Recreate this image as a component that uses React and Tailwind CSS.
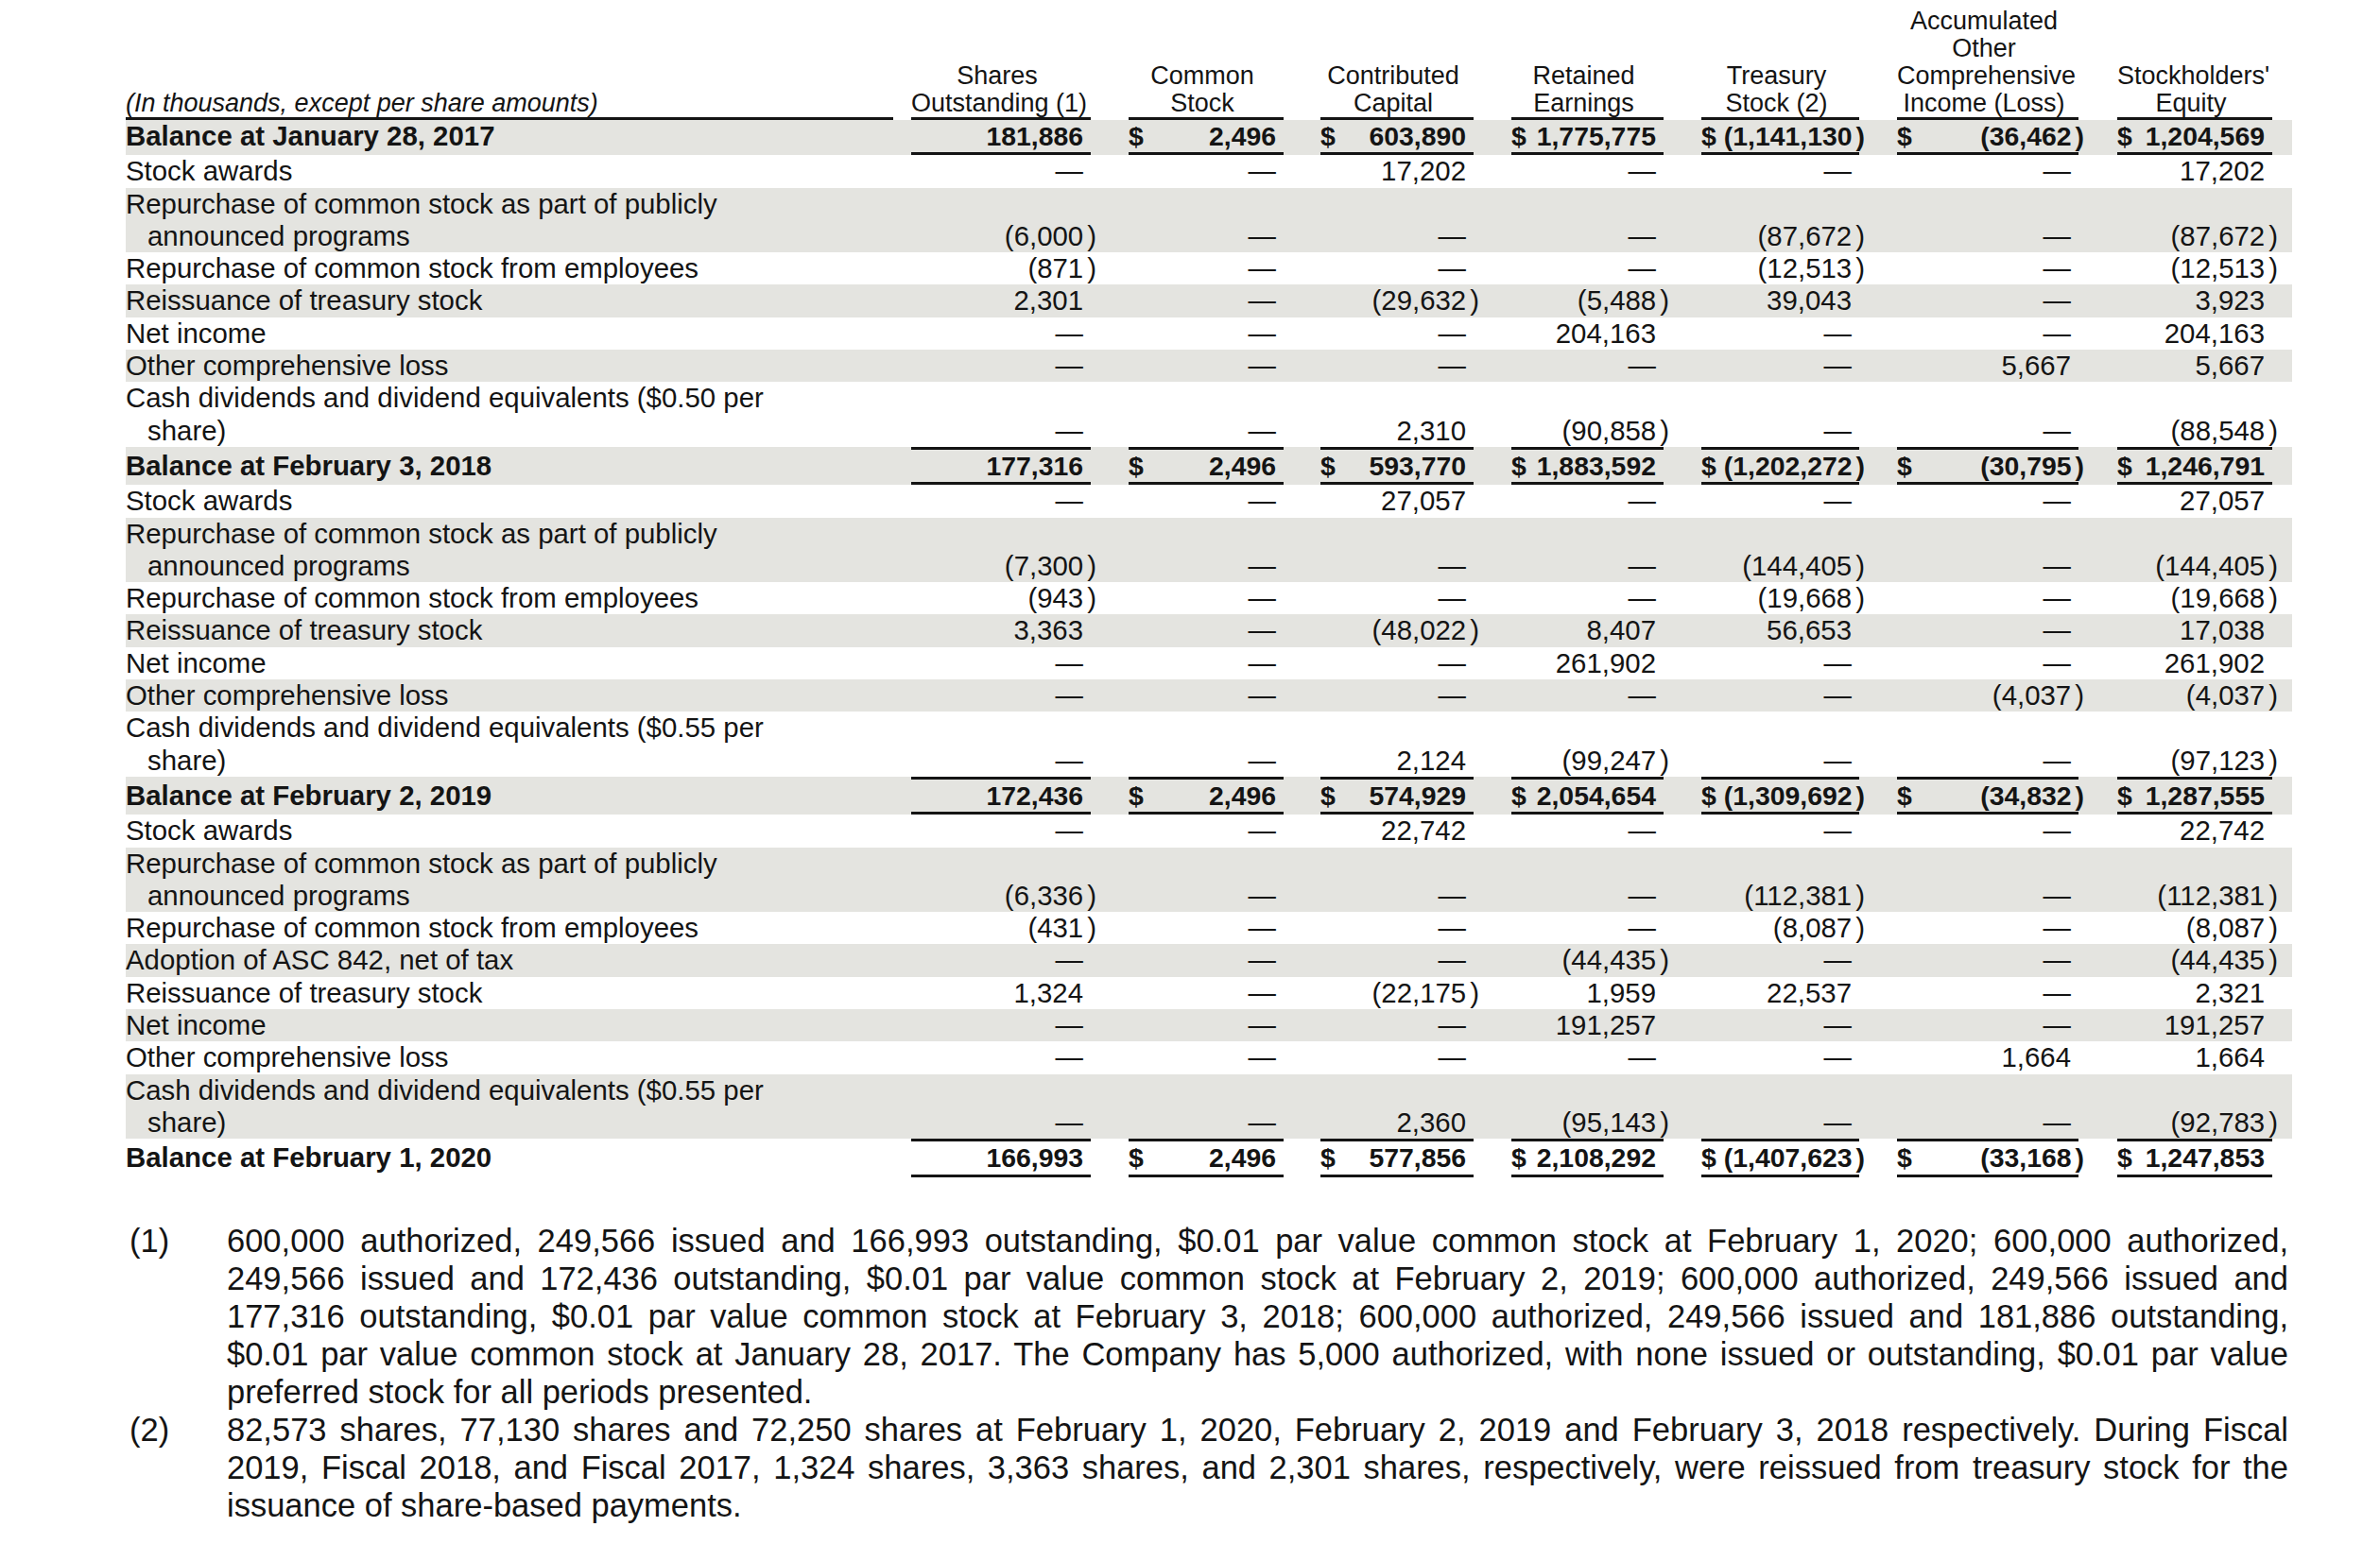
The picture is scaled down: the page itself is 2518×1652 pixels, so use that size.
const cols = [
  { head: ["Shares", "Outstanding (1)"], cls: "w-[190px] ml-[19px]" },
  { head: ["Common", "Stock"], cls: "w-[164px] ml-[40px]" },
  { head: ["Contributed", "Capital"], cls: "w-[162px] ml-[39px]" },
  { head: ["Retained", "Earnings"], cls: "w-[161px] ml-[40px]" },
  { head: ["Treasury", "Stock (2)"], cls: "w-[167px] ml-[40px]" },
  { head: ["Accumulated", "Other", "Comprehensive", "Income (Loss)"], cls: "w-[192px] ml-[40px]" },
  { head: ["Stockholders'", "Equity"], cls: "w-[164px] ml-[41px]" },
];

const D = "—";

const rows = [
  { label: ["Balance at January 28, 2017"], kind: "first", vals: ["181,886", "2,496", "603,890", "1,775,775", "(1,141,130)", "(36,462)", "1,204,569"] },
  { label: ["Stock awards"], vals: [D, D, "17,202", D, D, D, "17,202"] },
  { label: ["Repurchase of common stock as part of publicly", "announced programs"], vals: ["(6,000)", D, D, D, "(87,672)", D, "(87,672)"] },
  { label: ["Repurchase of common stock from employees"], vals: ["(871)", D, D, D, "(12,513)", D, "(12,513)"] },
  { label: ["Reissuance of treasury stock"], vals: ["2,301", D, "(29,632)", "(5,488)", "39,043", D, "3,923"] },
  { label: ["Net income"], vals: [D, D, D, "204,163", D, D, "204,163"] },
  { label: ["Other comprehensive loss"], vals: [D, D, D, D, D, "5,667", "5,667"] },
  { label: ["Cash dividends and dividend equivalents ($0.50 per", "share)"], vals: [D, D, "2,310", "(90,858)", D, D, "(88,548)"] },
  { label: ["Balance at February 3, 2018"], kind: "balance", vals: ["177,316", "2,496", "593,770", "1,883,592", "(1,202,272)", "(30,795)", "1,246,791"] },
  { label: ["Stock awards"], vals: [D, D, "27,057", D, D, D, "27,057"] },
  { label: ["Repurchase of common stock as part of publicly", "announced programs"], vals: ["(7,300)", D, D, D, "(144,405)", D, "(144,405)"] },
  { label: ["Repurchase of common stock from employees"], vals: ["(943)", D, D, D, "(19,668)", D, "(19,668)"] },
  { label: ["Reissuance of treasury stock"], vals: ["3,363", D, "(48,022)", "8,407", "56,653", D, "17,038"] },
  { label: ["Net income"], vals: [D, D, D, "261,902", D, D, "261,902"] },
  { label: ["Other comprehensive loss"], vals: [D, D, D, D, D, "(4,037)", "(4,037)"] },
  { label: ["Cash dividends and dividend equivalents ($0.55 per", "share)"], vals: [D, D, "2,124", "(99,247)", D, D, "(97,123)"] },
  { label: ["Balance at February 2, 2019"], kind: "balance", vals: ["172,436", "2,496", "574,929", "2,054,654", "(1,309,692)", "(34,832)", "1,287,555"] },
  { label: ["Stock awards"], vals: [D, D, "22,742", D, D, D, "22,742"] },
  { label: ["Repurchase of common stock as part of publicly", "announced programs"], vals: ["(6,336)", D, D, D, "(112,381)", D, "(112,381)"] },
  { label: ["Repurchase of common stock from employees"], vals: ["(431)", D, D, D, "(8,087)", D, "(8,087)"] },
  { label: ["Adoption of ASC 842, net of tax"], vals: [D, D, D, "(44,435)", D, D, "(44,435)"] },
  { label: ["Reissuance of treasury stock"], vals: ["1,324", D, "(22,175)", "1,959", "22,537", D, "2,321"] },
  { label: ["Net income"], vals: [D, D, D, "191,257", D, D, "191,257"] },
  { label: ["Other comprehensive loss"], vals: [D, D, D, D, D, "1,664", "1,664"] },
  { label: ["Cash dividends and dividend equivalents ($0.55 per", "share)"], vals: [D, D, "2,360", "(95,143)", D, D, "(92,783)"] },
  { label: ["Balance at February 1, 2020"], kind: "balance", vals: ["166,993", "2,496", "577,856", "2,108,292", "(1,407,623)", "(33,168)", "1,247,853"] },
];

const note1 = [
  "600,000 authorized, 249,566 issued and 166,993 outstanding, $0.01 par value common stock at February 1, 2020; 600,000 authorized,",
  "249,566 issued and 172,436 outstanding, $0.01 par value common stock at February 2, 2019; 600,000 authorized, 249,566 issued and",
  "177,316 outstanding, $0.01 par value common stock at February 3, 2018; 600,000 authorized, 249,566 issued and 181,886 outstanding,",
  "$0.01 par value common stock at January 28, 2017. The Company has 5,000 authorized, with none issued or outstanding, $0.01 par value",
  "preferred stock for all periods presented.",
];

const note2 = [
  "82,573 shares, 77,130 shares and 72,250 shares at February 1, 2020, February 2, 2019 and February 3, 2018 respectively. During Fiscal",
  "2019, Fiscal 2018, and Fiscal 2017, 1,324 shares, 3,363 shares, and 2,301 shares, respectively, were reissued from treasury stock for the",
  "issuance of share-based payments.",
];

function Num({ v }) {
  if (v.startsWith("(")) {
    return (
      <span>
        {v.slice(0, -1)}
        <span className="ml-[4px] -mr-[14px]">)</span>
      </span>
    );
  }
  return <span>{v}</span>;
}

function Footnote({ n, lines }) {
  return (
    <div className="flex">
      <div className="w-[107px] pl-[4px]">{n}</div>
      <div className="w-[2181px]">
        {lines.map((l, i) => (
          <div key={i} className={i < lines.length - 1 ? "text-justify [text-align-last:justify]" : ""}>
            {l}
          </div>
        ))}
      </div>
    </div>
  );
}

export default function App() {
  return (
    <div className="min-h-screen bg-white pl-[133px] text-[#141414] [font-family:'Liberation_Sans',Arial,sans-serif]">
      {/* header */}
      <div className="flex w-[2292px] items-end pt-[8px] text-[27px] leading-[29px]">
        <div className="w-[812px] border-b-[3px] border-[#141414] italic">(In thousands, except per share amounts)</div>
        {cols.map((c, i) => (
          <div key={i} className={`${c.cls} border-b-[3px] border-[#141414] pr-[8px] text-center`}>
            {c.head.map((h) => (
              <div key={h} className="whitespace-nowrap">{h}</div>
            ))}
          </div>
        ))}
      </div>

      {/* body */}
      <div className="w-[2292px] text-[29.4px] leading-[34.3px]">
        {rows.map((r, i) => {
          const bold = r.kind ? "font-bold" : "";
          const lineCls =
            r.kind === "balance" ? "border-y-[3px]" : r.kind === "first" ? "border-b-[3px]" : "";
          return (
            <div key={i} className={`flex items-end ${i % 2 === 0 ? "bg-[#e4e4e0]" : ""} ${bold}`}>
              <div className={`w-[812px] ${lineCls} border-transparent`}>
                {r.label.map((l, j) => (
                  <div key={j} className={j > 0 ? "pl-[23px]" : ""}>{l}</div>
                ))}
              </div>
              {r.vals.map((v, j) => (
                <div
                  key={j}
                  className={`${cols[j].cls} ${lineCls} ${r.kind ? "text-[28.4px]" : ""} flex justify-between whitespace-nowrap border-[#141414] pr-2`}
                >
                  <span>{r.kind && j > 0 ? "$" : ""}</span>
                  <Num v={v} />
                </div>
              ))}
            </div>
          );
        })}
      </div>

      {/* footnotes */}
      <div className="mt-[47px] w-[2288px] text-[34.5px] leading-[40px]">
        <Footnote n="(1)" lines={note1} />
        <Footnote n="(2)" lines={note2} />
      </div>
    </div>
  );
}
